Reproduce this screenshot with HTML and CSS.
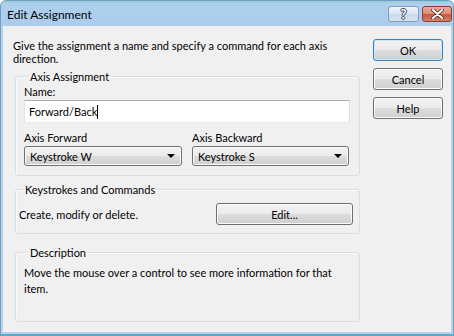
FILE: index.html
```html
<!DOCTYPE html>
<html lang="en">
<head>
    <meta charset="UTF-8">
    <title>Edit Assignment</title>
    <link rel="stylesheet" href="styles.css">
</head>
<body>
    <div class="window">
        <div class="titlebar">
            <span class="title">Edit Assignment</span>
            <div class="caption-buttons">
                <span class="cap-btn cap-help">?</span>
                <span class="cap-btn cap-close">
                    <svg width="13" height="10" viewBox="0 0 13 10">
                        <path d="M2 1 L11 9 M11 1 L2 9" stroke="#5a2a1e" stroke-width="3.6" stroke-linecap="round"/>
                        <path d="M2 1 L11 9 M11 1 L2 9" stroke="#ffffff" stroke-width="2" stroke-linecap="round"/>
                    </svg>
                </span>
            </div>
        </div>

        <div class="client">
            <div class="main">
                <p class="intro">Give the assignment a name and specify a command for each axis<br>direction.</p>

                <fieldset class="group group-axis">
                    <legend>Axis Assignment</legend>
                    <div class="field-label">Name:</div>
                    <div class="textbox">Forward/Back<span class="caret"></span></div>
                    <div class="axis-row">
                        <div class="axis-col">
                            <div class="field-label">Axis Forward</div>
                            <div class="combo">Keystroke W<span class="combo-arrow"></span></div>
                        </div>
                        <div class="axis-col">
                            <div class="field-label">Axis Backward</div>
                            <div class="combo">Keystroke S<span class="combo-arrow"></span></div>
                        </div>
                    </div>
                </fieldset>

                <fieldset class="group group-keys">
                    <legend>Keystrokes and Commands</legend>
                    <div class="keys-row">
                        <span>Create, modify or delete.</span>
                        <button class="btn btn-edit">Edit...</button>
                    </div>
                </fieldset>

                <fieldset class="group group-desc">
                    <legend>Description</legend>
                    <p class="desc-text">Move the mouse over a control to see more information for that<br>item.</p>
                </fieldset>
            </div>

            <div class="side">
                <button class="btn btn-default">OK</button>
                <button class="btn">Cancel</button>
                <button class="btn">Help</button>
            </div>
        </div>
    </div>
</body>
</html>
```

FILE: styles.css
```css
body {
    margin: 0;
    padding: 0;
    font-family: Lato, "Noto Sans", sans-serif;
    font-size: 11px;
    color: #000;
    background: #fff;
}

.window {
    width: 454px;
    height: 336px;
    box-sizing: border-box;
    display: flex;
    flex-direction: column;
    background: #b6d3ee;
    border: 1px solid #6f9fc0;
    border-bottom: 2px solid #5aaac6;
    border-radius: 6px 6px 0 0;
    overflow: hidden;
}

.titlebar {
    height: 25px;
    display: flex;
    align-items: center;
    justify-content: space-between;
    padding: 0 1px 0 6px;
    background: linear-gradient(#9ccad6 0, #aed0ec 3px, #acccee 100%);
}

.title {
    font-size: 12px;
    color: #000;
    margin-top: 1px;
}

.caption-buttons {
    display: flex;
    gap: 3px;
    margin-top: 1px;
}

.cap-btn {
    height: 16px;
    box-sizing: border-box;
    border-radius: 3px;
    display: flex;
    align-items: center;
    justify-content: center;
}

.cap-help {
    width: 31px;
    border: 1px solid #7f9db9;
    background: linear-gradient(#eef4fb 0%, #dbe7f4 50%, #c7d9ec 50%, #d6e4f2 100%);
    color: #f4f8fc;
    font-size: 13px;
    font-weight: bold;
    text-shadow: 0 0 1px #3c4e62, 1px 0 0 #3c4e62, -1px 0 0 #3c4e62, 0 1px 0 #3c4e62, 0 -1px 0 #3c4e62;
}

.cap-close {
    width: 30px;
    border: 1px solid #8f3e2c;
    background: linear-gradient(#eaa99a 0%, #dd8c78 50%, #c8543a 50%, #d4826c 100%);
}

.client {
    flex: 1;
    display: flex;
    gap: 13px;
    margin: 0 2px 2px 2px;
    padding: 13px 8px 0 10px;
    background: #f0f0f0;
}

.main {
    width: 347px;
    display: flex;
    flex-direction: column;
}

.intro {
    margin: 0 0 5px 0;
    line-height: 13px;
    white-space: nowrap;
}

.group {
    margin: 0 0 0 2px;
    padding: 0 9px 0 8px;
    border: 1px solid #d5dfe5;
    border-radius: 3px;
    box-shadow: inset 1px 1px 0 #fbfbfb;
}

.group legend {
    padding: 0 2px;
    margin-left: 4px;
    line-height: 13px;
}

.field-label {
    line-height: 13px;
    margin-bottom: 2px;
}

.group-axis {
    padding-top: 2px;
    padding-bottom: 9px;
}

.textbox {
    height: 23px;
    box-sizing: border-box;
    display: flex;
    align-items: center;
    padding-left: 4px;
    background: #fff;
    border: 1px solid #abadb3;
    border-color: #abadb3 #dbdfe6 #e3e9ef #e2e3ea;
    margin-bottom: 8px;
}

.caret {
    display: inline-block;
    width: 1px;
    height: 14px;
    background: #000;
}

.axis-row {
    display: grid;
    grid-template-columns: 158px 157px;
    gap: 10px;
}

.combo {
    height: 20px;
    box-sizing: border-box;
    display: flex;
    align-items: center;
    justify-content: space-between;
    padding: 0 6px 0 5px;
    border: 1px solid #707070;
    border-radius: 3px;
    background: linear-gradient(#f2f2f2 0%, #ebebeb 50%, #dddddd 50%, #cfcfcf 100%);
    box-shadow: inset 0 0 0 1px #fbfbfb;
}

.combo-arrow {
    width: 0;
    height: 0;
    border-left: 4px solid transparent;
    border-right: 4px solid transparent;
    border-top: 4px solid #000;
}

.group-keys {
    margin-top: 7px;
    padding: 7px 6px 8px 3px;
}

.keys-row {
    display: flex;
    align-items: center;
    justify-content: space-between;
}

.btn {
    height: 22px;
    box-sizing: border-box;
    padding: 0;
    font-family: inherit;
    font-size: 11px;
    color: #000;
    border: 1px solid #707070;
    border-radius: 3px;
    background: linear-gradient(#f2f2f2 0%, #ebebeb 50%, #dddddd 50%, #cfcfcf 100%);
    box-shadow: inset 0 0 0 1px #fbfbfb;
}

.btn-edit {
    width: 137px;
}

.btn-default {
    border-color: #3c7fb1;
    box-shadow: inset 0 0 0 1px #c7e9f8;
}

.group-desc {
    margin-top: 12px;
    height: 76px;
    box-sizing: border-box;
    padding: 6px 9px 0 8px;
}

.desc-text {
    margin: 0;
    line-height: 16px;
    white-space: nowrap;
}

.side {
    width: 70px;
    display: flex;
    flex-direction: column;
    gap: 7px;
}
```
